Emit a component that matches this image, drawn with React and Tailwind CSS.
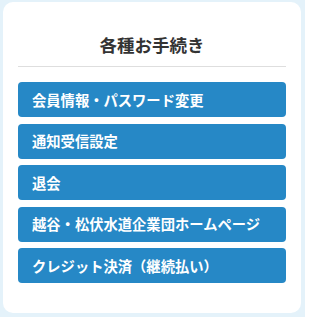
export default function App() {
  const items = [
    '会員情報・パスワード変更',
    '通知受信設定',
    '退会',
    '越谷・松伏水道企業団ホームページ',
    'クレジット決済（継続払い）',
  ];

  return (
    <div
      className="w-[305px] h-[317px] bg-[#e4f2fa] pt-[2px] px-[3px]"
      style={{ fontFamily: '"Noto Sans CJK JP", "Noto Sans", sans-serif' }}
    >
      <div className="w-[298px] h-[311px] bg-white rounded-[10px] px-[15px] pt-[31px]">
        <h2 className="text-center text-[17.5px] leading-[24px] font-bold text-[#333]">
          各種お手続き
        </h2>
        <div className="mt-[9px] border-t border-[#dedede]" />
        <div className="mt-[15px] flex flex-col gap-[6.5px]">
          {items.map((label) => (
            <a
              key={label}
              href="#"
              className="h-[35px] flex items-center pl-[14px] bg-[#2688c6] rounded-[4px] text-white text-[14.3px] font-bold"
            >
              {label}
            </a>
          ))}
        </div>
      </div>
    </div>
  );
}
